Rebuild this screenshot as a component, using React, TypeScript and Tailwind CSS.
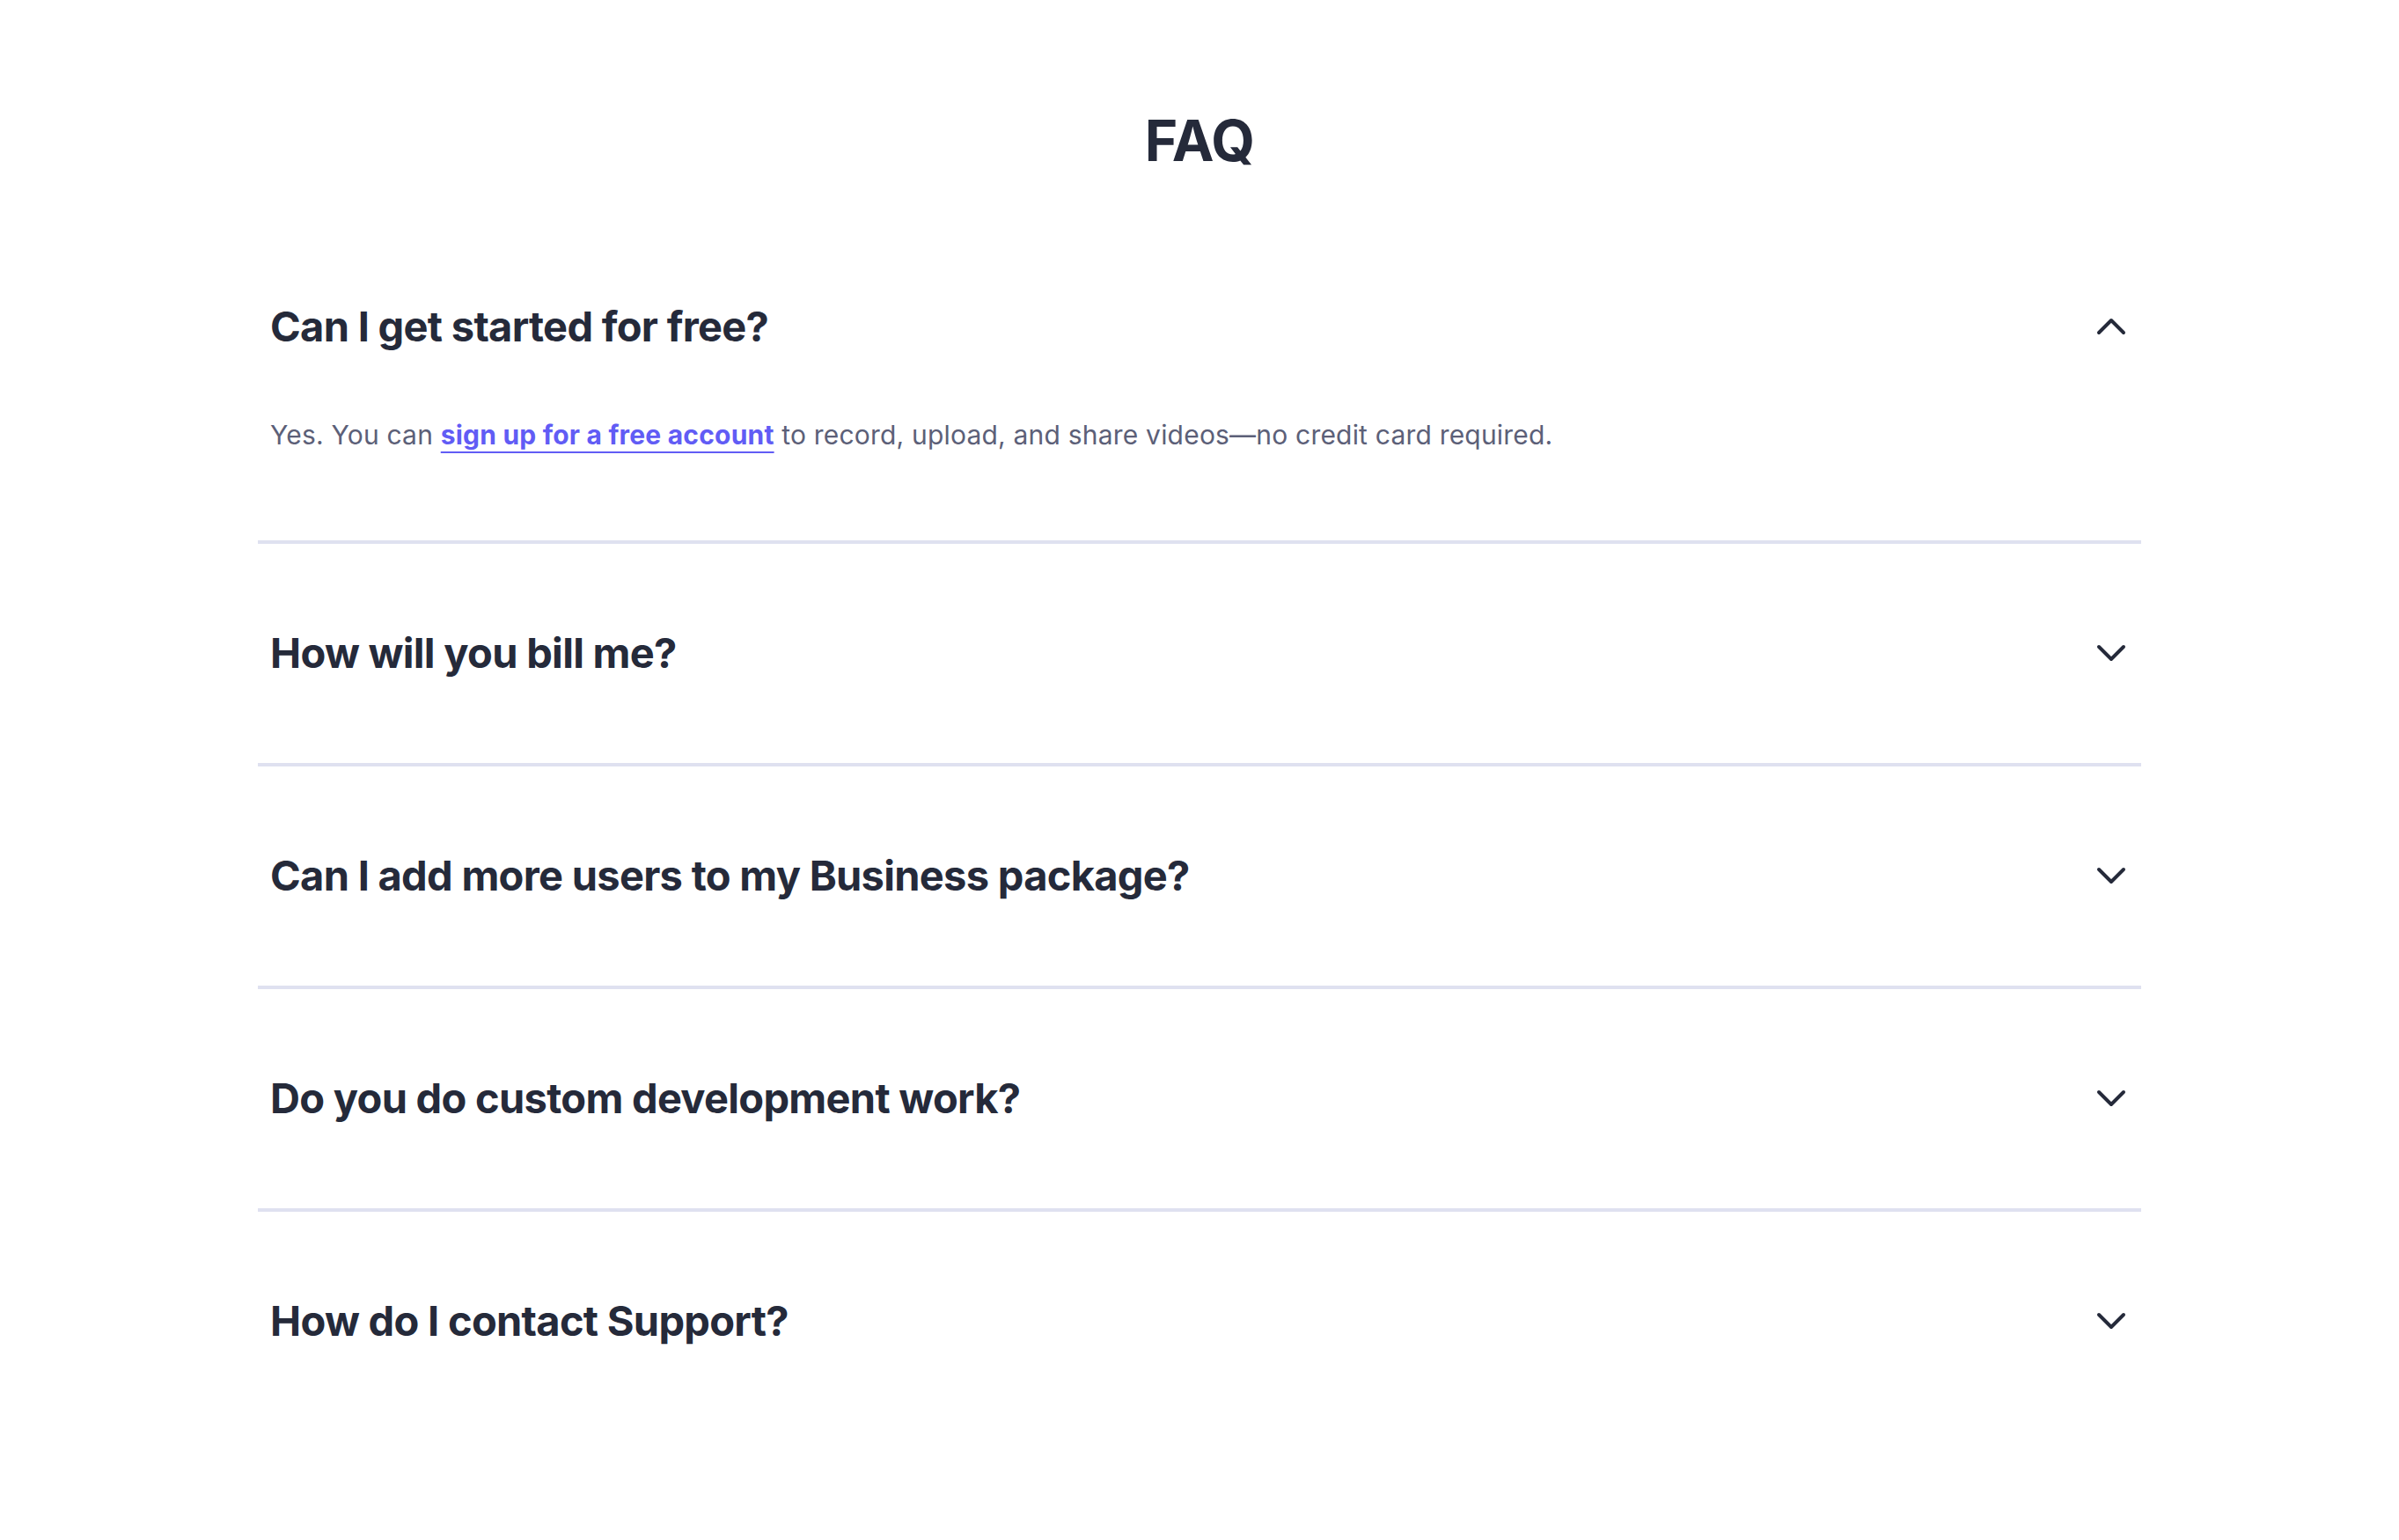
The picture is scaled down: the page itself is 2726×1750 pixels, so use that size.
import { useState } from "react"

const faqs = [
  {
    q: "Can I get started for free?",
    a: (
      <>
        Yes. You can{" "}
        <a href="#" className="font-bold text-[#615cf5] underline decoration-[2px] underline-offset-[8px]">
          sign up for a free account
        </a>{" "}
        to record, upload, and share videos—no credit card required.
      </>
    ),
  },
  { q: "How will you bill me?", a: null },
  { q: "Can I add more users to my Business package?", a: null },
  { q: "Do you do custom development work?", a: null },
  { q: "How do I contact Support?", a: null },
]

function Chevron({ up }: { up: boolean }) {
  return (
    <svg width="40" height="40" viewBox="0 0 40 40" fill="none" className="shrink-0">
      <path
        d={up ? "M6 27 L20 13 L34 27" : "M6 13 L20 27 L34 13"}
        stroke="#252a3a"
        strokeWidth="4"
        strokeLinecap="round"
        strokeLinejoin="round"
      />
    </svg>
  )
}

export default function App() {
  const [open, setOpen] = useState<number | null>(0)

  return (
    <div className="min-h-screen bg-white pt-[128px] font-['Inter',sans-serif] text-[#252a3a]">
      <h1 className="text-center text-[64px] font-bold leading-none tracking-[-0.01em]">FAQ</h1>

      <div className="mx-auto mt-[56px] w-[2140px]">
        {faqs.map((item, i) => {
          const isOpen = open === i
          const last = i === faqs.length - 1
          return (
            <div key={i} className={last ? "" : "border-b-4 border-[#dfe1f0]"}>
              <button
                onClick={() => setOpen(isOpen ? null : i)}
                className={`flex w-full items-center justify-between pl-[14px] pr-[14px] text-left ${
                  isOpen ? "pt-[93px] pb-[73px]" : "pt-[94px] pb-[95px]"
                }`}
              >
                <span className="text-[47px] font-bold leading-[60px] tracking-[-0.015em]">{item.q}</span>
                <Chevron up={isOpen} />
              </button>
              {isOpen && item.a && (
                <p className="pl-[14px] pb-[100px] text-[30px] leading-[40px] tracking-[0.2px] text-[#5c6078]">
                  {item.a}
                </p>
              )}
            </div>
          )
        })}
      </div>
    </div>
  )
}
